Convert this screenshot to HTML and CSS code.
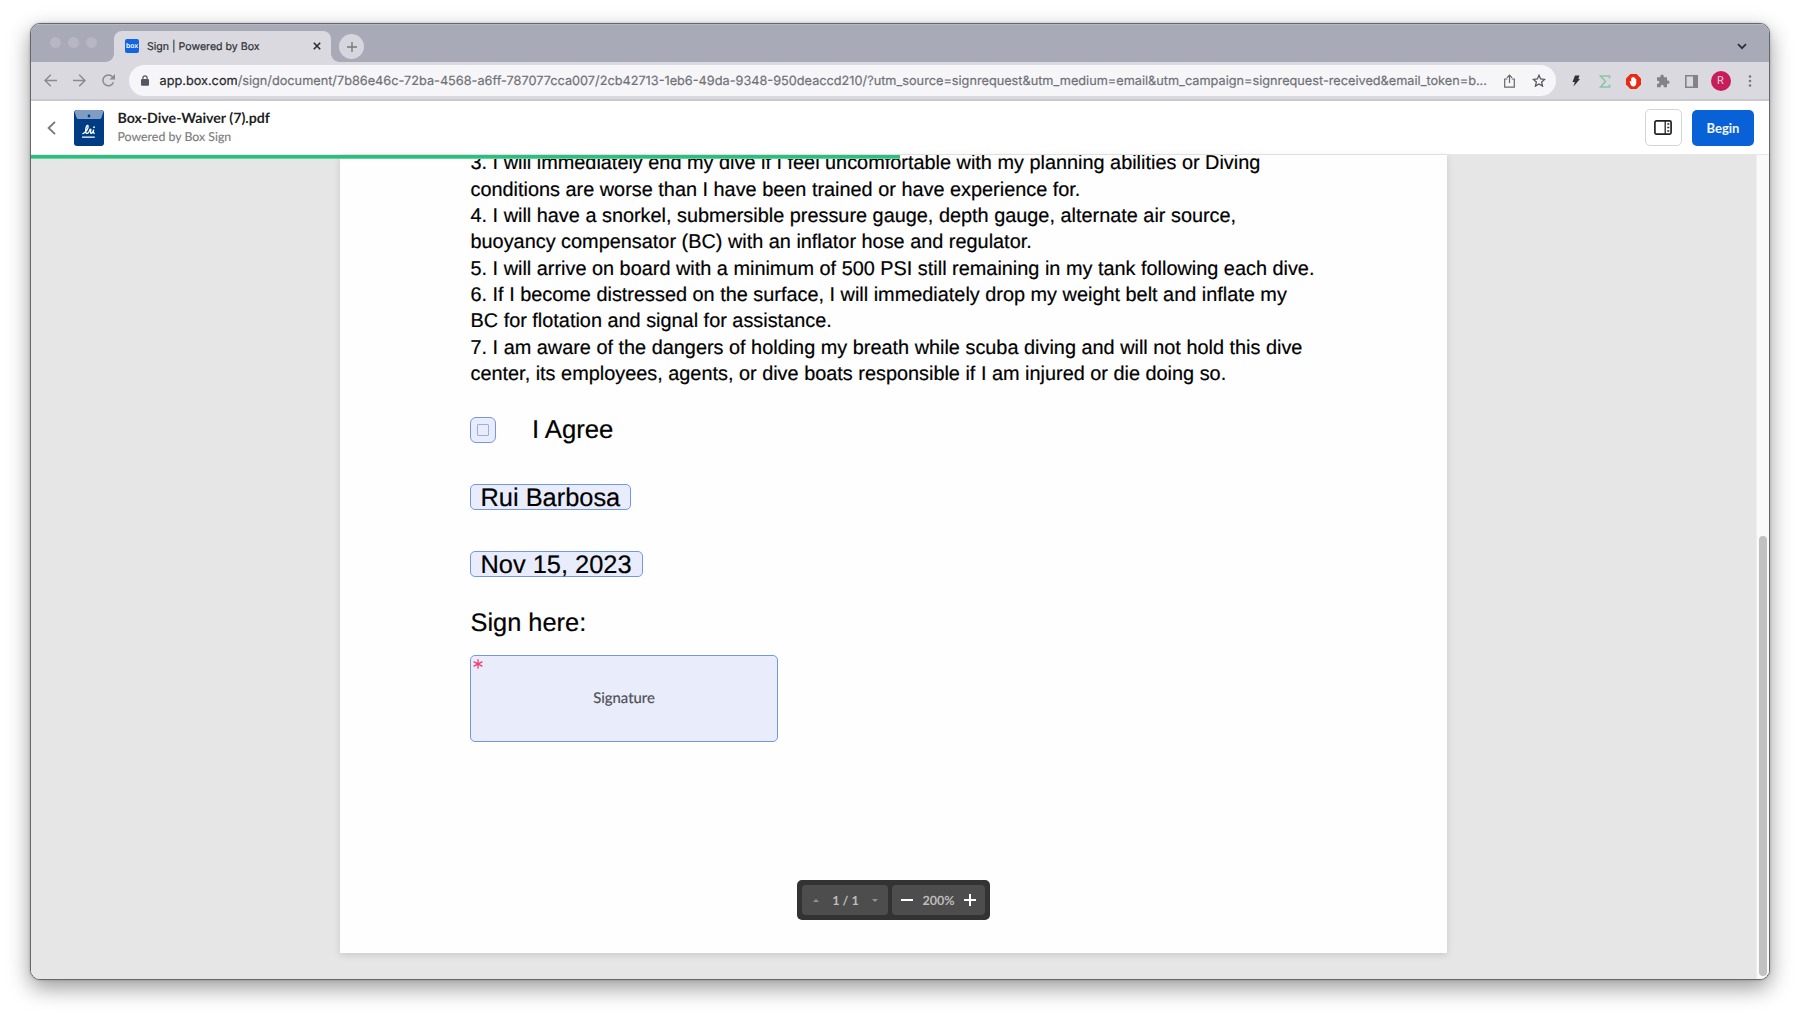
FILE: index.html
```html
<!DOCTYPE html>
<html lang="en">
<head>
<meta charset="utf-8">
<title>Sign | Powered by Box</title>
<link rel="stylesheet" href="styles.css">
</head>
<body>
<div class="window">
  <div class="tabstrip">
    <div class="lights"><i></i><i></i><i></i></div>
    <div class="tab">
      <span class="favicon">box</span>
      <span class="tab-title">Sign | Powered by Box</span>
      <svg class="tab-close" width="8" height="8" viewBox="0 0 8 8"><path d="M.8.8l6.4 6.4M7.2.8L.8 7.2" stroke="#2b2c31" stroke-width="1.6"/></svg>
    </div>
    <div class="newtab"><svg width="10" height="10" viewBox="0 0 10 10"><path d="M5 0v10M0 5h10" stroke="#77777d" stroke-width="1.4"/></svg></div>
    <svg class="tabsearch" width="10" height="7" viewBox="0 0 10 7"><path d="M1 1.2l4 4 4-4" fill="none" stroke="#2f3036" stroke-width="1.8"/></svg>
  </div>
  <div class="toolbar">
    <div class="nav">
      <svg width="13" height="13" viewBox="0 0 13 13"><path d="M13 6.5H1.2M6.8.7L1 6.5l5.800 5.800" fill="none" stroke="#8b8a90" stroke-width="1.5"/></svg>
      <svg width="13" height="13" viewBox="0 0 13 13"><path d="M0 6.500h11.800M6.200.7L12 6.500l-5.800 5.800" fill="none" stroke="#8b8a90" stroke-width="1.5"/></svg>
      <svg width="13" height="13" viewBox="0 0 13 13"><path d="M11.400 8.300A5.400 5.400 0 1 1 10.600 2.900" fill="none" stroke="#8b8a90" stroke-width="1.5"/><path d="M13 0v5.500H7.500z" fill="#8b8a90"/></svg>
    </div>
    <div class="address">
      <svg class="lock" width="8" height="11" viewBox="0 0 8 11"><rect y="4" width="8" height="6.800" rx="1" fill="#56575c"/><path d="M1.900 4.500V2.900a2.100 2.100 0 0 1 4.200 0v1.600" fill="none" stroke="#56575c" stroke-width="1.200"/></svg>
      <span class="url"><b>app.box.com</b>/sign/document/7b86e46c-72ba-4568-a6ff-787077cca007/2cb42713-1eb6-49da-9348-950deaccd210/?utm_source=signrequest&amp;utm_medium=email&amp;utm_campaign=signrequest-received&amp;email_token=b...</span>
      <svg class="share" width="11" height="14" viewBox="0 0 11 14"><path d="M3.300 5H.7v8.200h9.600V5H7.700M5.500 9V1.300M2.900 3.800l2.600-2.600 2.600 2.600" fill="none" stroke="#66676b" stroke-width="1.200"/></svg>
      <svg class="star" width="14" height="13" viewBox="0 0 14 13"><path d="M7 1.300l1.650 3.700 4 .4-3 2.700.9 4L7 10l-3.550 2.100.9-4-3-2.700 4-.4z" fill="none" stroke="#55565a" stroke-width="1.300"/></svg>
    </div>
    <div class="extensions">
      <svg width="14" height="16" viewBox="0 0 14 16"><path d="M6 2.500h4.500L9.300 6H11l-6.500 7.500 1.300-4.600H3.500z" fill="#303135"/></svg>
      <svg width="12" height="13" viewBox="0 0 12 13"><path d="M10.500 3.500V1H1.500l5 5.500-5 5.500h9V9.500" fill="none" stroke="#8cc5a6" stroke-width="1.600"/></svg>
      <svg width="15" height="15" viewBox="0 0 15 15"><path d="M4.400 0h6.200L15 4.400v6.200L10.600 15H4.400L0 10.600V4.400z" fill="#e92a12"/><path d="M3.600 7.200q.7-.5 1.300.3l.3.500V4q.6-.8 1.200 0V3.100q.7-.8 1.300 0v.7q.7-.7 1.300 0v1q.8-.6 1.300.1v4.500q-.5 3-3.100 3-1.700 0-2.500-1.700z" fill="#fff"/></svg>
      <svg width="14" height="14" viewBox="0 0 14 14"><path d="M1 3.300h3.400V2.200a1.700 1.700 0 0 1 3.400 0v1.100H11v3.300h1a1.600 1.600 0 0 1 0 3.200h-1v3.500H7.700v-1a1.500 1.500 0 0 0-3 0v1H1V9.700h.9a1.500 1.500 0 0 0 0-3H1z" fill="#828287"/></svg>
      <svg width="13" height="13" viewBox="0 0 13 13"><path d="M.8.8h11.400v11.400H.8z" fill="none" stroke="#828287" stroke-width="1.600"/><path d="M8 0h5v13H8z" fill="#828287"/></svg>
      <span class="avatar">R</span>
      <svg width="4" height="12" viewBox="0 0 4 12"><g fill="#77777c"><circle cx="2" cy="1.500" r="1.300"/><circle cx="2" cy="6" r="1.300"/><circle cx="2" cy="10.500" r="1.300"/></g></svg>
    </div>
  </div>
  <header class="appbar">
    <svg class="back" width="9" height="14" viewBox="0 0 9 14"><path d="M8 .8L1.600 7 8 13.200" fill="none" stroke="#77777b" stroke-width="1.800"/></svg>
    <svg class="doc-icon" width="30" height="36" viewBox="0 0 30 36"><rect width="30" height="36" rx="3" fill="#003c84"/><path d="M3 0h24a3 3 0 0 1 2.500 1.500L27.500 7.500Q27 9 25.500 9h-21Q3 9 2.500 7.500L.5 1.500A3 3 0 0 1 3 0z" fill="#7f9dc4"/><circle cx="15" cy="6" r="1.400" fill="#003c84"/><path d="M8.500 23.800c3.200-1.200 6.200-5.500 5.600-8-.8-1.600-2.500 1.400-2.500 5 0 3.900 3 3.400 4.100-.7.900-1.500 1.500-.9 1 .8-.4 1.800 0 2.800 1 2.300 1.100-.5 1.500-2 2-3.500-.7 2.700-.4 4 1.200 3.300M8 27.200h12.800" fill="none" stroke="#fff" stroke-width="1.300"/><circle cx="20" cy="17.200" r=".9" fill="#fff"/></svg>
    <div class="names"><div class="filename">Box-Dive-Waiver (7).pdf</div><div class="powered">Powered by Box Sign</div></div>
    <button class="panel-btn"><svg width="18" height="15" viewBox="0 0 18 15"><rect x=".9" y=".9" width="16.200" height="13.200" rx="1.500" fill="none" stroke="#222" stroke-width="1.700"/><path d="M11.200 1v13" stroke="#222" stroke-width="1.300"/><path d="M13.300 4h2M13.300 7.500h2M13.300 11h2" stroke="#222" stroke-width="1.500"/></svg></button>
    <button class="begin">Begin</button>
  </header>
  <main class="viewer">
    <div class="progress"></div>
    <article class="page">
      <div class="terms">
        <div>3. I will immediately end my dive if I feel uncomfortable with my planning abilities or Diving</div>
        <div>conditions are worse than I have been trained or have experience for.</div>
        <div>4. I will have a snorkel, submersible pressure gauge, depth gauge, alternate air source,</div>
        <div>buoyancy compensator (BC) with an inflator hose and regulator.</div>
        <div>5. I will arrive on board with a minimum of 500 PSI still remaining in my tank following each dive.</div>
        <div>6. If I become distressed on the surface, I will immediately drop my weight belt and inflate my</div>
        <div>BC for flotation and signal for assistance.</div>
        <div>7. I am aware of the dangers of holding my breath while scuba diving and will not hold this dive</div>
        <div>center, its employees, agents, or dive boats responsible if I am injured or die doing so.</div>
      </div>
      <div class="agree"><span class="field check"><i></i></span><span class="large">I Agree</span></div>
      <div class="field name large">Rui Barbosa</div>
      <div class="field date large">Nov 15, 2023</div>
      <div class="sign-label large">Sign here:</div>
      <div class="field signature"><svg class="required" width="10" height="10" viewBox="0 0 10 10"><path d="M5 .2v9.600M.6 2.600l8.800 4.800M.6 7.400l8.800-4.800" stroke="#f23d6d" stroke-width="1.300"/></svg>Signature</div>
    </article>
    <div class="scrollbar"><i></i></div>
    <div class="controls">
      <div class="group pager"><svg width="6" height="3" viewBox="0 0 6 3"><path d="M0 3l3-3 3 3z" fill="#929292"/></svg><span>1 / 1</span><svg width="6" height="3" viewBox="0 0 6 3"><path d="M0 0l3 3 3-3z" fill="#929292"/></svg></div>
      <div class="group zoom"><svg width="12" height="12" viewBox="0 0 12 12"><path d="M0 6h12" stroke="#fff" stroke-width="2"/></svg><span>200%</span><svg width="12" height="12" viewBox="0 0 12 12"><path d="M0 6h12M6 0v12" stroke="#fff" stroke-width="2"/></svg></div>
    </div>
  </main>
</div>
</body>
</html>
```
FILE: styles.css
```css
* { box-sizing: border-box; }
body { margin: 0; height: 1017px; padding: 23px 30px 37px; background: #fff; overflow: hidden; text-rendering: geometricPrecision; }
svg { display: block; flex: none; }
button { padding: 0; font: inherit; }
.window { height: 957px; display: flex; flex-direction: column; border: 1px solid #66676a; border-radius: 10px; overflow: hidden; background: #fff; box-shadow: 0 8px 22px rgba(0,0,0,.4), 0 0 3px rgba(0,0,0,.2); }

.tabstrip { height: 38px; flex: none; display: flex; background: #a8aab7; font-family: Inter, sans-serif; box-shadow: inset 0 1px #b7b8c2; }
.lights { display: flex; gap: 7px; padding: 13px 0 0 19px; width: 83px; }
.lights i { width: 11px; height: 11px; border-radius: 50%; background: #b6b7c2; }
.tab { width: 217px; height: 31px; margin-top: 7px; padding: 0 10px 1px 11px; display: flex; align-items: center; border-radius: 8px 8px 0 0; background: #dad9e0; position: relative; }
.tab::before, .tab::after { content: ""; position: absolute; bottom: 0; width: 8px; height: 8px; }
.tab::before { left: -8px; background: radial-gradient(circle at 0 0, transparent 7.5px, #dad9e0 8px); }
.tab::after { right: -8px; background: radial-gradient(circle at 100% 0, transparent 7.5px, #dad9e0 8px); }
.favicon { width: 14px; height: 14px; border-radius: 2px; background: #1264e0; color: #fff; font: 600 6.800px/14px Inter, sans-serif; text-align: center; }
.tab-title { margin-left: 8px; font-size: 10.600px; color: #303136; -webkit-text-stroke: .2px; flex: 1; white-space: nowrap; }
.newtab { width: 25px; height: 25px; margin: 10px 0 0 8px; border-radius: 50%; background: #d6d6dd; display: grid; place-items: center; }
.tabsearch { margin: 19px 22px 0 auto; }

.toolbar { height: 39px; flex: none; display: flex; align-items: center; background: #dad9e0; border-bottom: 2px solid #cac9cf; font-family: Inter, sans-serif; }
.nav { width: 98px; display: flex; gap: 16px; padding-left: 13px; }
.address { width: 1427px; height: 31px; padding: 0 10px 0 12px; border-radius: 16px; background: #f6f6f9; display: flex; align-items: center; }
.url { margin-left: 10.500px; padding-top: 1px; flex: 1; min-width: 0; font-size: 12.725px; color: #707176; -webkit-text-stroke: .2px; white-space: nowrap; }
.url b { font-weight: 400; color: #27282c; }
.share { margin-right: 17px; }
.extensions { flex: 1; display: grid; grid-template-columns: repeat(7, 29px); place-items: center; padding: 1px 0 0 5px; }
.avatar { width: 20px; height: 20px; border-radius: 50%; background: #c71d5b; color: #f4d5df; font: 11px/20px Roboto, sans-serif; text-align: center; }

.appbar { height: 54px; flex: none; display: flex; align-items: center; padding: 0 15px 0 16px; background: #fff; border-bottom: 1px solid #e8e8e8; font-family: Lato, sans-serif; }
.doc-icon { margin-left: 18px; }
.names { margin-left: 13.500px; flex: 1; white-space: nowrap; }
.filename { font-weight: 700; font-size: 14.200px; line-height: 18px; color: #222; }
.powered { font-size: 12.350px; line-height: 18px; color: #7c7c7c; -webkit-text-stroke: .15px; }
.panel-btn { width: 37px; height: 37px; border: 1px solid #d5d5d5; border-radius: 5px; background: #fff; display: grid; place-items: center; }
.begin { width: 62px; height: 36px; margin-left: 10.500px; border: 0; border-radius: 5px; background: #0961d8; color: #f2f7ff; font-weight: 700; font-size: 13px; }

.viewer { flex: 1; min-height: 0; display: flex; position: relative; background: #e6e6e6; }
.progress { position: absolute; left: 0; top: 0; width: 869px; height: 4px; background: #29bf7d; border-bottom: 1px solid #68d0a1; z-index: 1; }
.page { width: 1107px; height: 798px; margin-left: 309px; padding: 0 130px; overflow: hidden; background: #fefefe; box-shadow: 0 2px 7px rgba(0,0,0,.13); color: #000; font-family: "Liberation Sans", Arial, sans-serif; }
.terms { margin-top: -4.600px; padding-left: .5px; font-size: 19.890px; line-height: 26.330px; -webkit-text-stroke: .2px; white-space: nowrap; }
.large { font-size: 25.400px; line-height: 26px; -webkit-text-stroke: .2px; white-space: nowrap; }
.field { border: 1px solid #7397e8; border-radius: 5px; background: #e9edfb; }
.agree { display: flex; margin-top: 29.600px; gap: 36px; }
.agree .large { font-size: 25.700px; }
.check { width: 26px; height: 26px; border-radius: 6px; display: grid; place-items: center; }
.check i { width: 12px; height: 12px; border: 1px solid #9aadec; border-radius: 1px; }
.name, .date { height: 26px; padding-left: 9.500px; }
.name { width: 161px; margin-top: 41px; }
.date { width: 173px; margin-top: 41px; }
.sign-label { margin-top: 33px; padding-left: .5px; }
.signature { width: 308px; height: 87px; margin-top: 19px; display: grid; place-items: center; position: relative; font: 14.900px Lato, sans-serif; -webkit-text-stroke: .2px; color: #4e4f54; }
.required { position: absolute; left: 2px; top: 3px; }
.scrollbar { width: 13px; margin-left: auto; padding: 381px 3px 0 2px; background: #fafafa; border-left: 1px solid #eee; }
.scrollbar i { display: block; width: 8px; height: 440px; border-radius: 4px; background: #c1c1c1; }
.controls { position: absolute; left: 766px; top: 725px; width: 193px; height: 40px; padding: 5px; display: flex; gap: 4px; border-radius: 5px; background: #333; color: #bcbcbc; font: 700 12.600px Lato, sans-serif; }
.group { display: flex; align-items: center; justify-content: space-between; border-radius: 4px; background: #4d4d4d; }
.pager { width: 86px; padding: 0 10px 0 11px; }
.zoom { flex: 1; padding: 0 9px 0 9px; }
```
